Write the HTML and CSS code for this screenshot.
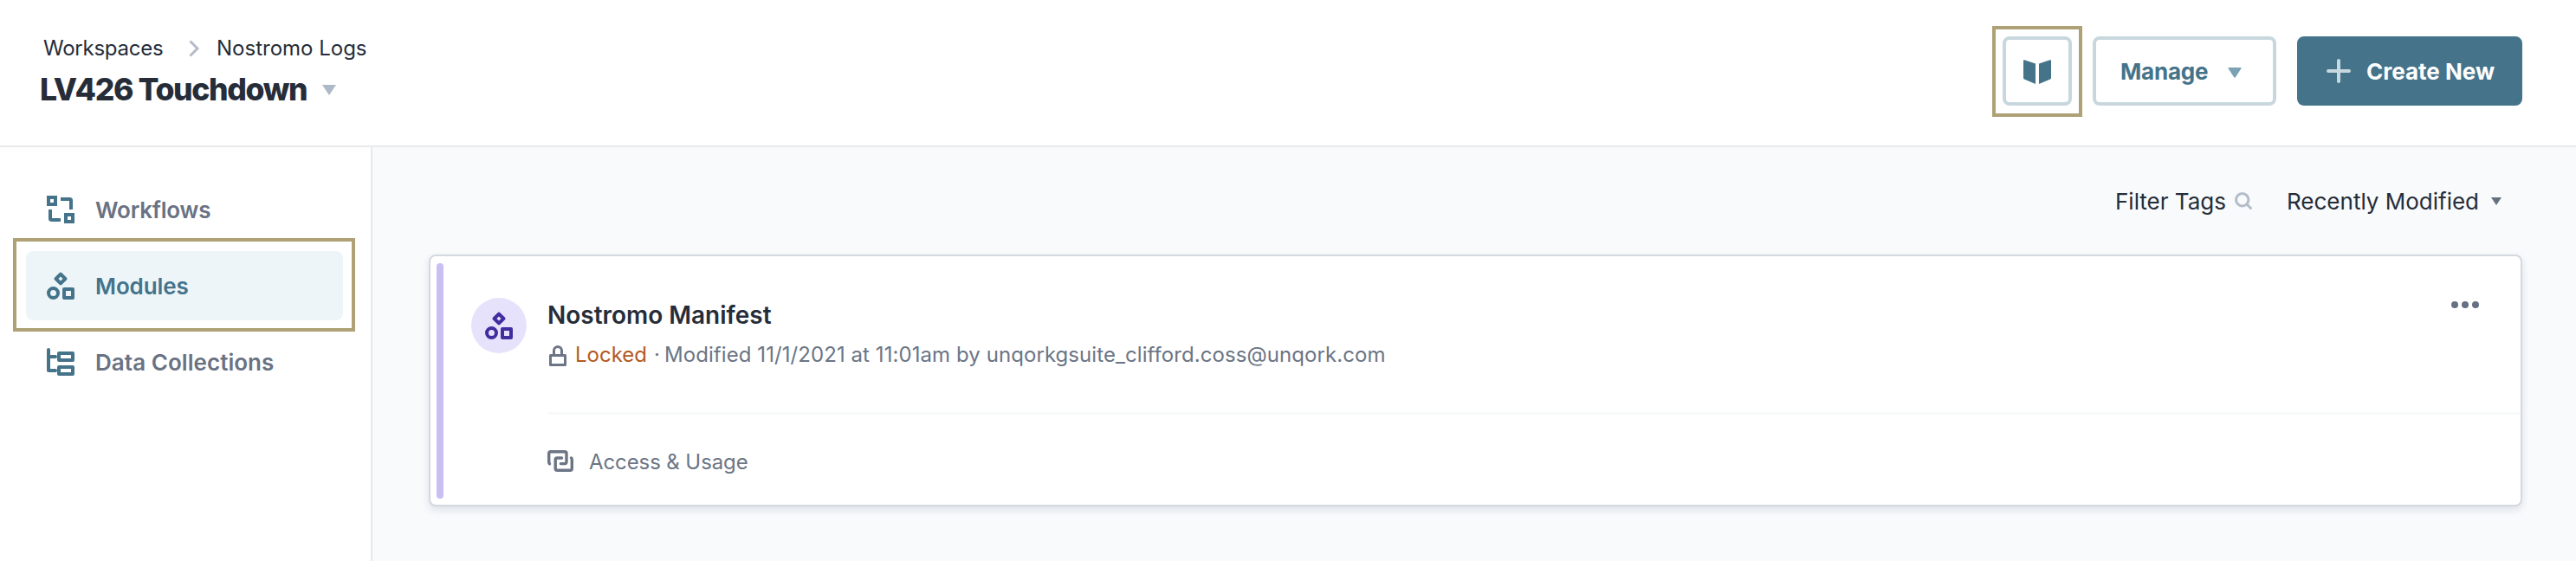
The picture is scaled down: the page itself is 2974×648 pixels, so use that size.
FILE: index.html
```html
<!DOCTYPE html>
<html lang="en">
<head>
<meta charset="utf-8">
<title>LV426 Touchdown</title>
<link rel="stylesheet" href="styles.css">
</head>
<body>
<svg class="defs" width="0" height="0" aria-hidden="true">
  <symbol id="modules" viewBox="0 0 32 32">
    <g fill="none" stroke="currentColor" stroke-width="4" stroke-linejoin="round">
      <path d="M16 2.600 21.400 8 16 13.400 10.600 8Z"/>
      <circle cx="7.500" cy="24.500" r="5.500"/>
      <path d="M20 20h10v10H20z"/>
    </g>
  </symbol>
</svg>
<div class="app">
  <header class="header">
    <div class="heading">
      <nav class="crumbs">
        <a class="crumb crumb-root">Workspaces</a>
        <svg class="crumb-sep" width="12" height="20" viewBox="0 0 12 20"><path d="M1.500 1.500 10 10 1.500 18.500" fill="none" stroke="#b4bcc9" stroke-width="3"/></svg>
        <a class="crumb crumb-leaf">Nostromo Logs</a>
      </nav>
      <div class="title-row">
        <h1 class="title">LV426 Touchdown</h1>
        <svg width="16" height="12" viewBox="0 0 16 12"><path d="M0 0h16L8 12z" fill="#aeb9c7"/></svg>
      </div>
    </div>
    <div class="actions">
      <button class="btn btn-book">
        <svg width="32" height="28" viewBox="0 0 32 28"><path d="M0 1.200Q0 0 1.200.3L14 4.500V28L1 22.500Q0 22 0 21zM32 1.200Q32 0 30.800.3L18 4.500V28l13-5.500q1-.5 1-1.500z" fill="#44738a"/></svg>
        <span class="marker"></span>
      </button>
      <button class="btn btn-manage"><span class="manage-label">Manage</span>
        <svg width="16" height="12" viewBox="0 0 16 12"><path d="M1 0h14q1 0 .5 1L9 11q-1 1.500-2 0L.5 1Q0 0 1 0z" fill="#7ba1b3"/></svg>
      </button>
      <button class="btn btn-create">
        <svg width="28" height="28" viewBox="0 0 28 28"><path d="M14 2v24M2 14h24" stroke="#c8d8df" stroke-width="4" stroke-linecap="round"/></svg>
        <span class="create-label">Create New</span>
      </button>
    </div>
  </header>
  <div class="body">
    <aside class="sidebar">
      <a class="nav-item">
        <svg width="32" height="32" viewBox="0 0 32 32"><g fill="none" stroke="currentColor" stroke-width="4"><path d="M2 2h8v8H2zM22 22h8v8h-8z"/><path d="M16 4h10.500Q28 4 28 5.500V16M4 16v10.500Q4 28 5.500 28H16"/></g></svg>
        <span class="nav-label label-workflows">Workflows</span>
      </a>
      <a class="nav-item active">
        <svg width="32" height="32"><use href="#modules"/></svg>
        <span class="nav-label label-modules">Modules</span>
        <span class="marker"></span>
      </a>
      <a class="nav-item">
        <svg width="32" height="32" viewBox="0 0 32 32"><g fill="none" stroke="currentColor" stroke-width="4" stroke-linejoin="round"><path d="M2 2v24h8M2 10h8" stroke-linecap="round"/><path d="M14 6h16v8H14zM14 22h16v8H14z"/></g></svg>
        <span class="nav-label label-data">Data Collections</span>
      </a>
    </aside>
    <main class="main">
      <div class="toolbar">
        <div class="filter"><span class="filter-label">Filter Tags</span>
          <svg width="20" height="20" viewBox="0 0 20 20"><g fill="none" stroke="#b4bcc9" stroke-width="3" stroke-linecap="round"><circle cx="8.700" cy="8.700" r="7.200"/><path d="m14 14 4.500 4.500"/></g></svg>
        </div>
        <div class="sort"><span class="sort-label">Recently Modified</span>
          <svg width="12" height="9" viewBox="0 0 12 9"><path d="M0 0h12L6 9z" fill="#66717f"/></svg>
        </div>
      </div>
      <article class="card">
        <div class="accent"></div>
        <div class="avatar"><svg width="32" height="32"><use href="#modules"/></svg></div>
        <div class="content">
          <div class="summary">
            <div class="info">
              <h2 class="card-title">Nostromo Manifest</h2>
              <p class="meta">
                <svg width="20" height="24" viewBox="0 0 20 24"><g fill="none" stroke="#6b7585" stroke-width="3"><path d="M1.500 11.500h17v11h-17z" stroke-linejoin="round"/><path d="M5.500 11V6a4.500 4.500 0 0 1 9 0v5"/></g></svg>
                <span class="locked">Locked</span><span class="dot">·</span><span class="modified">Modified 11/1/2021 at 11:01am by unqorkgsuite_clifford.coss@unqork.com</span>
              </p>
            </div>
            <svg class="more" width="32" height="8" viewBox="0 0 32 8"><g fill="#667085"><circle cx="4" cy="4" r="4"/><circle cx="16" cy="4" r="4"/><circle cx="28" cy="4" r="4"/></g></svg>
          </div>
          <div class="access">
            <svg width="30" height="25" viewBox="0 0 30 25"><g fill="none" stroke="#6b7585" stroke-width="3.400" stroke-linejoin="round" stroke-linecap="round"><path d="M2.500 15.800Q1.700 15 1.700 13.500V3.700Q1.700 1.700 3.700 1.700H20Q22 1.700 22 3.700V13.600Q22 15.600 20 15.600H15.400"/><path d="M27.500 9q.8.500.8 2v10.300q0 2-2 2H11.200q-2 0-2-2V11q0-2 2-2H16.500"/></g></svg>
            <span class="access-label">Access &amp; Usage</span>
          </div>
        </div>
      </article>
    </main>
  </div>
</div>
</body>
</html>
```
FILE: styles.css
```css
* { box-sizing: border-box; }
body {
  margin: 0;
  background: #fff;
  color: #262d39;
  font-family: Inter, "Liberation Sans", sans-serif;
}
svg { display: block; flex: none; }
.defs { position: absolute; }
h1, h2, p { margin: 0; }
span, a, h1, h2 { white-space: nowrap; }
.app { display: flex; flex-direction: column; height: 648px; overflow: hidden; }

.header {
  display: flex;
  justify-content: space-between;
  height: 170px;
  padding: 36px 62px 0 46px;
  border-bottom: 2px solid #e8eaec;
}
.crumbs { display: flex; align-items: center; height: 40px; padding-left: 4px; font-size: 24px; line-height: 40px; }
.crumb-root { width: 168px; letter-spacing: -.25px; }
.crumb-leaf { margin-left: 20px; }
.title-row { display: flex; align-items: center; height: 56px; }
.title { width: 326px; font-size: 35.500px; font-weight: 800; line-height: 56px; letter-spacing: -1.350px; }

.actions { display: flex; align-items: flex-start; padding-top: 6px; }
.btn {
  position: relative;
  display: flex;
  align-items: center;
  height: 80px;
  padding: 0;
  border: 4px solid #c8d7de;
  border-radius: 8px;
  background: #fff;
  color: #44738a;
  font: 650 26px/40px Inter, "Liberation Sans", sans-serif;
}
.btn-book { justify-content: center; width: 80px; padding-top: 2px; }
.btn-manage { width: 212px; margin-left: 24px; padding: 4px 0 0 28px; }
.manage-label { width: 124px; margin-top: -2px; text-align: left; letter-spacing: -.2px; }
.btn-create { width: 260px; margin-left: 24px; padding-left: 30px; border-color: #44738a; background: #44738a; color: #fff; }
.create-label { margin: 2px 0 0 18px; }
.marker { position: absolute; border: 4px solid #ada175; pointer-events: none; }
.btn-book .marker { inset: -16px -16px -17px; }

.body { display: flex; flex: 1; }
.sidebar { display: flex; flex-direction: column; gap: 8px; width: 430px; padding: 32px 32px 0 30px; border-right: 2px solid #e6e9ed; }
.nav-item { position: relative; display: flex; align-items: center; gap: 24px; height: 80px; padding-left: 24px; border-radius: 8px; color: #44738a; font-size: 26px; font-weight: 620; }
.nav-label { margin-top: 2px; color: #697283; line-height: 40px; }
.label-workflows { letter-spacing: -.2px; }
.label-data { letter-spacing: .05px; }
.active { background: #edf5f9; }
.active .nav-label { color: #44738a; letter-spacing: -.1px; }
.active .marker { inset: -15px -14px -13px -15px; }

.main { flex: 1; padding: 36px 62px 0 65px; background: #f8fafc; }
.toolbar { display: flex; justify-content: flex-end; height: 88px; padding-right: 24px; font-size: 26px; line-height: 52px; }
.filter, .sort { display: flex; align-items: center; height: 52px; }
.filter-label { width: 138px; }
.filter-label, .sort-label { margin-top: 2px; }
.sort { margin-left: 40px; }
.sort-label { width: 236px; }
.card {
  display: flex;
  height: 291px;
  padding: 8px 0 0 7px;
  border: 2px solid #d3d9df;
  border-radius: 8px;
  background: #fff;
  box-shadow: 0 4px 8px rgba(30, 50, 80, .12);
}
.accent { width: 8px; height: 272px; border-radius: 4px; background: #cabff5; }
.avatar { display: flex; align-items: center; justify-content: center; width: 64px; height: 64px; margin: 40px 24px 0 32px; border-radius: 50%; background: #e7e2fb; color: #422da0; }
.content { flex: 1; }
.summary { display: flex; justify-content: space-between; height: 175px; padding-right: 48px; border-bottom: 3px solid #f8f9fa; }
.info { padding-top: 40px; }
.card-title { font-size: 28px; font-weight: 620; line-height: 40px; letter-spacing: -.02px; }
.meta { display: flex; align-items: center; height: 48px; padding-left: 2px; color: #6b7585; font-size: 24px; line-height: 48px; }
.meta svg { margin-top: 5px; }
.meta span { margin-top: 3px; }
.modified { letter-spacing: .07px; }
.meta .locked { width: 91px; margin-left: 10px; color: #b35a20; }
.dot { width: 12px; }
.more { margin-top: 44px; }
.access { display: flex; align-items: center; height: 108px; color: #6b7585; font-size: 24px; }
.access svg { margin-top: -1px; }
.access-label { margin: 1px 0 0 18px; letter-spacing: -.1px; }
```
